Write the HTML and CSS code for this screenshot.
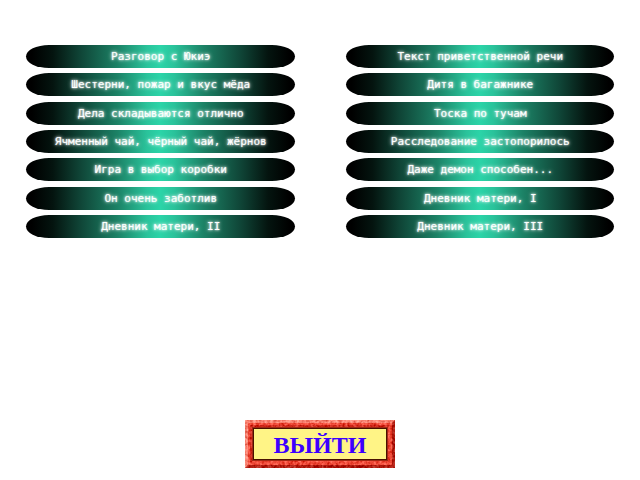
FILE: index.html
```
<!DOCTYPE html>
<html lang="ru">
<head>
<meta charset="utf-8">
<meta name="viewport" content="width=device-width, initial-scale=1">
<title>Архив</title>
<link rel="stylesheet" href="styles.css">
</head>
<body>
<main class="menu">
  <div class="entries">
    <button type="button" class="entry">Разговор с Юкиэ</button>
    <button type="button" class="entry">Текст приветственной речи</button>
    <button type="button" class="entry">Шестерни, пожар и вкус мёда</button>
    <button type="button" class="entry">Дитя в багажнике</button>
    <button type="button" class="entry">Дела складываются отлично</button>
    <button type="button" class="entry">Тоска по тучам</button>
    <button type="button" class="entry">Ячменный чай, чёрный чай, жёрнов</button>
    <button type="button" class="entry">Расследование застопорилось</button>
    <button type="button" class="entry">Игра в выбор коробки</button>
    <button type="button" class="entry">Даже демон способен...</button>
    <button type="button" class="entry">Он очень заботлив</button>
    <button type="button" class="entry">Дневник матери, I</button>
    <button type="button" class="entry">Дневник матери, II</button>
    <button type="button" class="entry">Дневник матери, III</button>
  </div>
  <button type="button" class="exit">
    <svg class="exit-frame" viewBox="0 0 150 48" preserveAspectRatio="none" aria-hidden="true">
      <defs>
        <filter id="grain" x="0" y="0" width="100%" height="100%" color-interpolation-filters="sRGB">
          <feTurbulence type="fractalNoise" baseFrequency="0.35" numOctaves="2" seed="4" result="noise"/>
          <feColorMatrix in="noise" type="matrix" values="0.4 0 0 0 0.3  0.6 0 0 0 0.2  0.6 0 0 0 0.2  0 0 0 0 1" result="grey"/>
          <feComposite in="SourceGraphic" in2="grey" operator="arithmetic" k1="0" k2="1" k3="1" k4="-0.5"/>
        </filter>
      </defs>
      <g filter="url(#grain)">
        <path fill="#ee4a38" d="M0 0H150V48H0Z"/>
        <path fill="#fa8574" d="M0 0H150L147 3H3V45L0 48Z"/>
        <path fill="#b01c10" d="M150 0V48H0L3 45H147V3Z"/>
        <path fill="#d02c1e" d="M5 5H145L143 7H7V41L5 43Z"/>
      </g>
      <path fill="#a02814" d="M7 7H143V41H7Z"/>
      <path fill="#4a1000" d="M8 8H142V40H8Z"/>
      <path fill="#fff486" d="M9 9H141V39H9Z"/>
    </svg>
    <span class="exit-label">ВЫЙТИ</span>
  </button>
</main>
</body>
</html>
```
FILE: styles.css
```
* {
  box-sizing: border-box;
}

body {
  margin: 0;
  background: #fff;
}

.menu {
  display: flex;
  flex-direction: column;
  justify-content: space-between;
  align-items: center;
  min-height: 100vh;
  padding: 45px 26px 12px;
}

.entries {
  display: grid;
  grid-template-columns: 1fr 1fr;
  column-gap: 51px;
  align-content: space-between;
  width: 100%;
  height: 193px;
}

.entry {
  height: 23px;
  padding: 0 0 0 1px;
  border: 0;
  border-radius: 24px / 12px;
  background: linear-gradient(90deg, #000 2%, #04140f 10%, #0f4436 20%, #1c8266 34%, #2ac39b 45%, #2bd4a8 50%, #2ac39b 55%, #1c8266 66%, #0f4436 80%, #04140f 90%, #000 98%);
  color: #fff;
  font: 11px/23px "DejaVu Sans Mono", monospace;
  text-align: center;
  text-shadow: 0 0 2px #fff, 0 0 4px #fff;
  white-space: nowrap;
  cursor: pointer;
}

.exit {
  position: relative;
  width: 150px;
  height: 48px;
  padding: 2px 0 0;
  border: 0;
  background: none;
  color: #3c00ff;
  font: bold 24px/46px "Liberation Serif", serif;
  cursor: pointer;
}

.exit-frame {
  position: absolute;
  inset: 0;
  width: 100%;
  height: 100%;
}

.exit-label {
  position: relative;
}
```
